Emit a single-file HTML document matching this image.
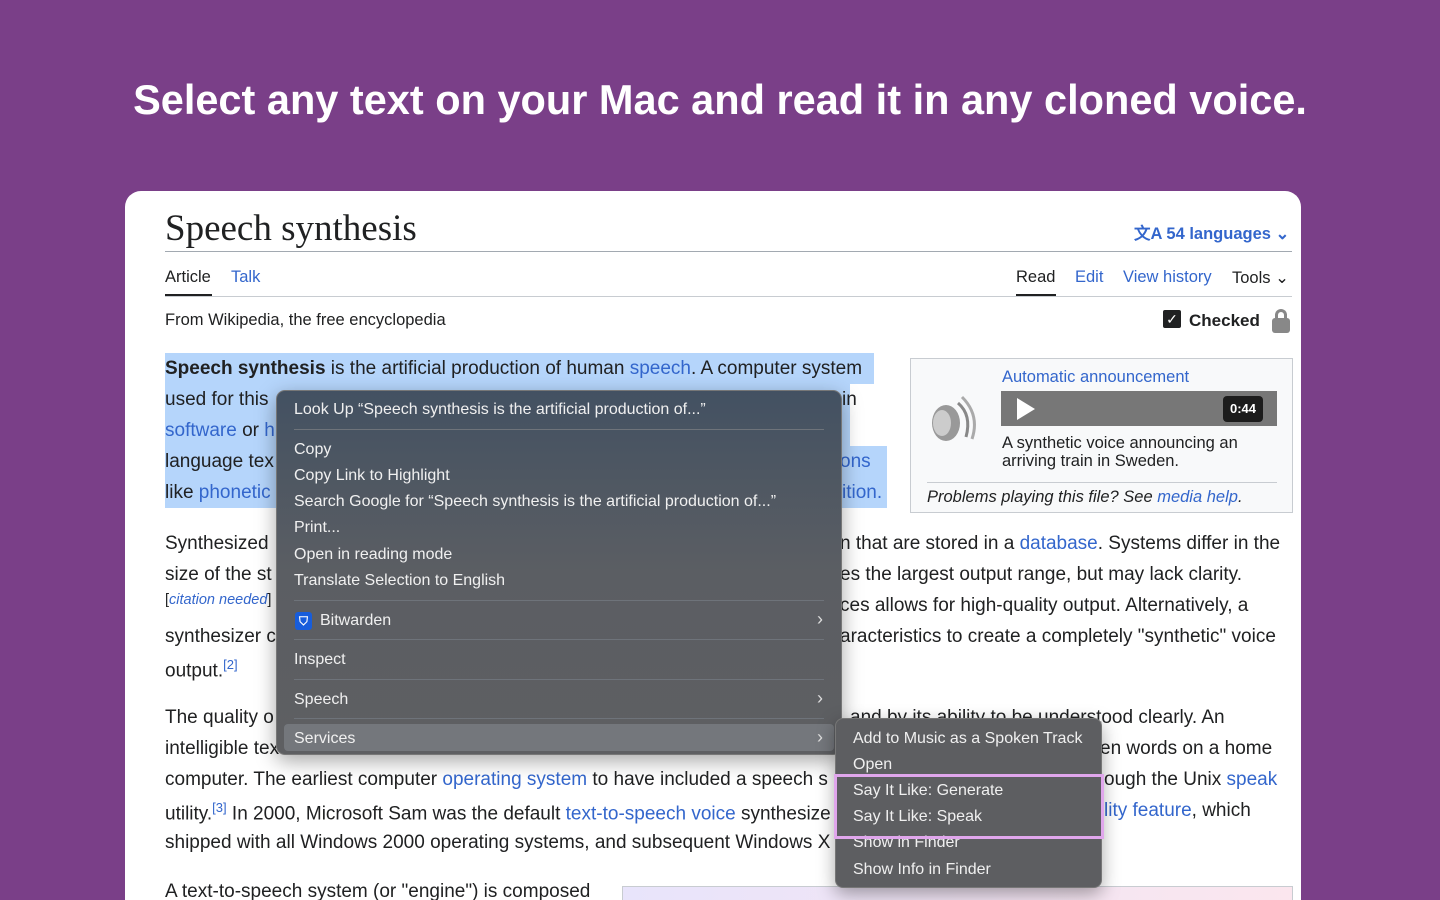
<!DOCTYPE html>
<html><head><meta charset="utf-8"><style>
*{margin:0;padding:0;box-sizing:border-box}
html,body{width:1440px;height:900px;overflow:hidden}
body{background:#7a3f88;font-family:"Liberation Sans",Arial,sans-serif;position:relative}
h1{position:absolute;left:0;width:1440px;top:76px;text-align:center;color:#fff;font-size:41.5px;font-weight:700;letter-spacing:0}
.card{position:absolute;left:125px;top:191px;width:1176px;height:709px;background:#fff;border-radius:16px 16px 0 0;overflow:hidden}
.a{position:absolute;white-space:nowrap;color:#202122}
.l{color:#3366cc}
.t{font-size:19px}
.sel{position:absolute;background:#b5d5fb}
.menu{position:absolute;left:276px;top:390px;width:566px;height:365px;border-radius:9px;background:linear-gradient(#435162,#5b5e63 50%,#5e5f62);box-shadow:0 6px 20px rgba(0,0,0,.35);border:1px solid #777}
.mi{position:absolute;left:17px;color:#f0f0f0;font-size:16px;white-space:nowrap}
.sep{position:absolute;left:17px;right:17px;height:1px;background:#6e737a}
.chev{position:absolute;right:18px;color:#ddd;font-size:18px}
.sub{position:absolute;left:835px;top:718px;width:267px;height:170px;border-radius:8px;background:#5d5e61;box-shadow:0 6px 18px rgba(0,0,0,.35);border:1px solid #777}
</style></head><body>
<h1>Select any text on your Mac and read it in any cloned voice.</h1>
<div class="card"></div>
<div class="a" style="left:165px;top:207px;font-family:'Liberation Serif',serif;font-size:37px">Speech synthesis</div>
<div class="a l" style="left:1134px;top:220px;font-size:16.5px;font-weight:700">文A 54 languages ⌄</div>
<div style="position:absolute;left:165px;top:251px;width:1127px;height:1px;background:#a2a9b1"></div>
<div class="a" style="left:165px;top:268px;font-size:16.5px">Article</div>
<div style="position:absolute;left:165px;top:294px;width:47px;height:2px;background:#202122"></div>
<div class="a l" style="left:231px;top:268px;font-size:16.5px">Talk</div>
<div class="a" style="left:1016px;top:268px;font-size:16.5px">Read</div>
<div style="position:absolute;left:1016px;top:294px;width:40px;height:2px;background:#202122"></div>
<div class="a l" style="left:1075px;top:268px;font-size:16.5px">Edit</div>
<div class="a l" style="left:1123px;top:268px;font-size:16.5px">View history</div>
<div class="a" style="left:1232px;top:268px;font-size:16.5px">Tools ⌄</div>
<div style="position:absolute;left:165px;top:296px;width:1127px;height:1px;background:#c8ccd1"></div>
<div class="a" style="left:165px;top:311px;font-size:16.5px">From Wikipedia, the free encyclopedia</div>
<div style="position:absolute;left:1163px;top:310px;width:18px;height:18px;background:#202122;border-radius:2px;color:#fff;font-size:14px;text-align:center;line-height:18px">✓</div>
<div class="a" style="left:1189px;top:311px;font-size:17px;font-weight:700">Checked</div>
<div style="position:absolute;left:1272px;top:318px;width:18px;height:15px;background:#888;border-radius:3px"></div>
<div style="position:absolute;left:1275px;top:309px;width:12px;height:13px;border:3px solid #888;border-bottom:none;border-radius:6px 6px 0 0"></div>

<div class="sel" style="left:165px;top:353px;width:709px;height:31px"></div>
<div class="sel" style="left:165px;top:384px;width:685px;height:124px"></div>
<div class="sel" style="left:840px;top:446px;width:47px;height:62px"></div>
<div class="a t" style="left:165px;top:358px"><b>Speech synthesis</b> is the artificial production of human <span class="l">speech</span>. A computer system</div>
<div class="a t" style="left:165px;top:389px">used for this</div>
<div class="a t" style="left:842px;top:389px">in</div>
<div class="a t" style="left:165px;top:420px"><span class="l">software</span> or <span class="l">h</span></div>
<div class="a t" style="left:165px;top:451px">language tex</div>
<div class="a t l" style="left:840px;top:451px">ons</div>
<div class="a t" style="left:165px;top:482px">like <span class="l">phonetic</span></div>
<div class="a t l" style="left:842px;top:482px">ition.</div>

<div style="position:absolute;left:910px;top:358px;width:383px;height:155px;border:1px solid #c8ccd1;background:#f8f9fa"></div>
<svg style="position:absolute;left:928px;top:393px" width="52" height="50"><ellipse cx="18" cy="30" rx="14" ry="18" fill="#999"/><ellipse cx="14" cy="30" rx="9" ry="13" fill="#ccc"/><path d="M30 10 Q44 22 38 44" stroke="#888" stroke-width="3" fill="none"/><path d="M34 4 Q52 22 44 46" stroke="#aaa" stroke-width="3" fill="none"/></svg>
<div class="a l" style="left:1002px;top:368px;font-size:16.5px">Automatic announcement</div>
<div style="position:absolute;left:1001px;top:391px;width:276px;height:35px;background:#777"></div>
<div style="position:absolute;left:1017px;top:398px;width:0;height:0;border-left:18px solid #fff;border-top:11px solid transparent;border-bottom:11px solid transparent"></div>
<div style="position:absolute;left:1223px;top:396px;width:40px;height:26px;background:#1c1c1c;border-radius:4px;color:#fff;font-size:13px;font-weight:700;text-align:center;line-height:26px">0:44</div>
<div class="a" style="left:1002px;top:434px;font-size:16.5px;line-height:18px">A synthetic voice announcing an<br>arriving train in Sweden.</div>
<div style="position:absolute;left:927px;top:482px;width:350px;height:1px;background:#c8ccd1"></div>
<div class="a" style="left:927px;top:488px;font-size:16.5px;font-style:italic">Problems playing this file? See <span class="l">media help</span>.</div>

<div class="a t" style="left:165px;top:533px">Synthesized</div>
<div class="a t" style="left:840px;top:533px">n that are stored in a <span class="l">database</span>. Systems differ in the</div>
<div class="a t" style="left:165px;top:564px">size of the st</div>
<div class="a t" style="left:840px;top:564px">es the largest output range, but may lack clarity.</div>
<div class="a" style="left:165px;top:592px;font-size:14.5px">[<i class="l">citation needed</i>]</div>
<div class="a t" style="left:840px;top:595px">ces allows for high-quality output. Alternatively, a</div>
<div class="a t" style="left:165px;top:626px">synthesizer c</div>
<div class="a t" style="left:840px;top:626px">aracteristics to create a completely "synthetic" voice</div>
<div class="a t" style="left:165px;top:657px">output.<sup class="l" style="font-size:13px">[2]</sup></div>
<div class="a t" style="left:165px;top:707px">The quality o</div>
<div class="a t" style="left:850px;top:707px">and by its ability to be understood clearly. An</div>
<div class="a t" style="left:165px;top:738px">intelligible tex</div>
<div class="a t" style="left:1100px;top:738px">en words on a home</div>
<div class="a t" style="left:165px;top:769px">computer. The earliest computer <span class="l">operating system</span> to have included a speech s</div>
<div class="a t" style="left:1104px;top:769px">ough the Unix <span class="l">speak</span></div>
<div class="a t" style="left:165px;top:800px">utility.<sup class="l" style="font-size:13px">[3]</sup> In 2000, Microsoft Sam was the default <span class="l">text-to-speech voice</span> synthesize</div>
<div class="a t l" style="left:1104px;top:800px">lity feature<span style="color:#202122">, which</span></div>
<div class="a t" style="left:165px;top:832px">shipped with all Windows 2000 operating systems, and subsequent Windows X</div>
<div class="a t" style="left:165px;top:881px">A text-to-speech system (or "engine") is composed</div>
<div style="position:absolute;left:622px;top:886px;width:671px;height:20px;border:1px solid #c8ccd1;background:linear-gradient(90deg,#e8e4fb,#fbe6ee)"></div>

<div class="menu">
<div class="mi" style="top:10px">Look Up “Speech synthesis is the artificial production of...”</div>
<div class="sep" style="top:38px"></div>
<div class="mi" style="top:50px">Copy</div>
<div class="mi" style="top:76px">Copy Link to Highlight</div>
<div class="mi" style="top:102px">Search Google for “Speech synthesis is the artificial production of...”</div>
<div class="mi" style="top:128px">Print...</div>
<div class="mi" style="top:155px">Open in reading mode</div>
<div class="mi" style="top:181px">Translate Selection to English</div>
<div class="sep" style="top:209px"></div>
<div style="position:absolute;left:18px;top:221px;width:17px;height:18px;background:#175ddc;border-radius:3px;color:#fff;font-size:12px;text-align:center;line-height:18px;font-weight:700">⛉</div>
<div class="mi" style="top:221px;left:43px">Bitwarden</div><div class="chev" style="top:218px">›</div>
<div class="sep" style="top:248px"></div>
<div class="mi" style="top:260px">Inspect</div>
<div class="sep" style="top:288px"></div>
<div class="mi" style="top:300px">Speech</div><div class="chev" style="top:297px">›</div>
<div class="sep" style="top:327px"></div>
<div style="position:absolute;left:7px;right:7px;top:333px;height:27px;background:#74777c;border-radius:4px"></div>
<div class="mi" style="top:339px">Services</div><div class="chev" style="top:336px">›</div>
</div>
<div class="sub">
<div class="mi" style="top:11px">Add to Music as a Spoken Track</div>
<div class="mi" style="top:37px">Open</div>
<div class="mi" style="top:63px">Say It Like: Generate</div>
<div class="mi" style="top:89px">Say It Like: Speak</div>
<div class="mi" style="top:115px">Show in Finder</div>
<div class="mi" style="top:142px">Show Info in Finder</div>
</div>
<div style="position:absolute;left:834px;top:774px;width:270px;height:65px;border:3px solid #e0a6ec"></div>
</body></html>
